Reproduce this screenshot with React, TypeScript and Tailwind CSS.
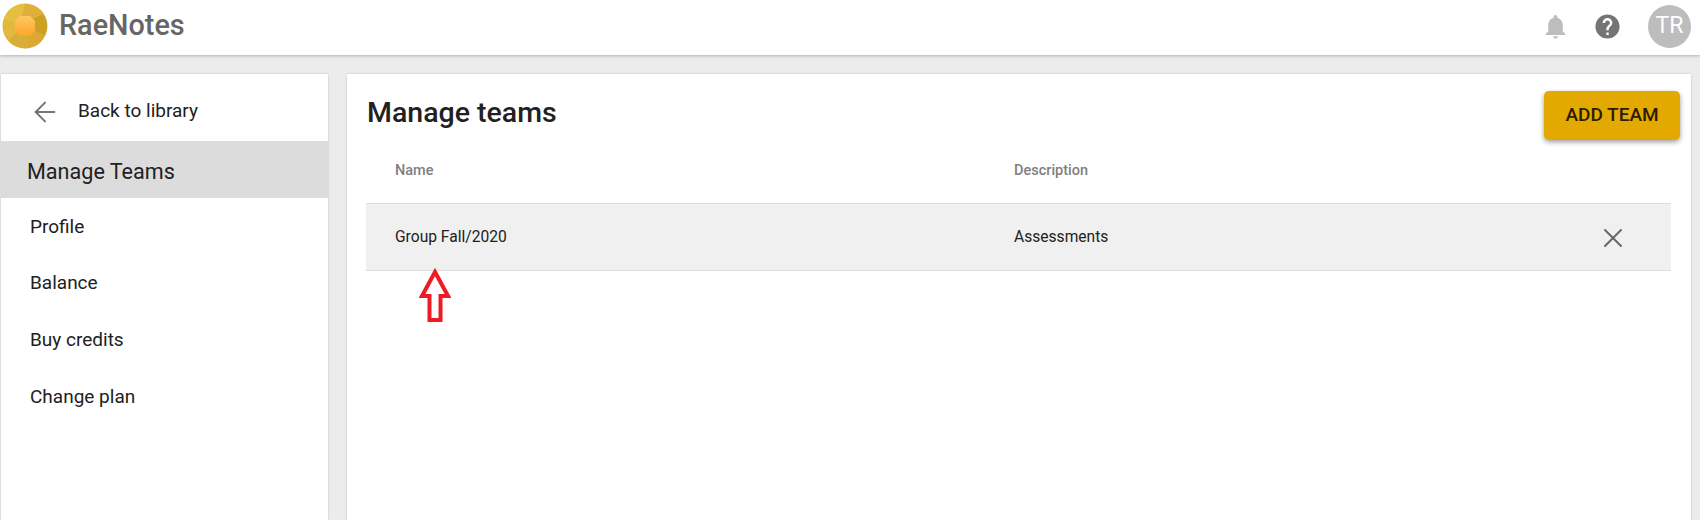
import { ArrowLeft, X } from "lucide-react"

const menuItems = ["Profile", "Balance", "Buy credits", "Change plan"]

function Logo() {
  return (
    <svg width="46" height="46" viewBox="0 0 46 46" className="shrink-0">
      <defs>
        <linearGradient id="core" x1="0" y1="0" x2="0" y2="1">
          <stop offset="0" stopColor="#fdc765" />
          <stop offset="1" stopColor="#fea726" />
        </linearGradient>
      </defs>
      <circle cx="23" cy="23" r="22.5" fill="#dcb135" />
      <path d="M23 1A22 22 0 0 1 41 11L30 15 20 12Z" fill="#dfae3d" />
      <path d="M41 11A22 22 0 0 1 43 32L33 28 31 16Z" fill="#caa025" />
      <path d="M43 32A22 22 0 0 1 27 45L25 33 33 28Z" fill="#dda733" />
      <path d="M27 45A22 22 0 0 1 7 37L15 29 25 33Z" fill="#d9ad3a" />
      <path d="M7 37A22 22 0 0 1 2 16L13 20 15 29Z" fill="#e2b83e" />
      <path d="M2 16A22 22 0 0 1 23 1L20 12 13 20Z" fill="#e6bf3f" />
      <path d="M18 13H28L33 18V28L28 33H18L13 28V18Z" fill="url(#core)" />
    </svg>
  )
}

function BellIcon() {
  return (
    <svg width="29" height="29" viewBox="0 0 24 24" fill="#bdbdbd">
      <path d="M12 22c1.1 0 2-.9 2-2h-4c0 1.1.9 2 2 2zm6-6v-5c0-3.07-1.63-5.64-4.5-6.32V4c0-.83-.67-1.5-1.5-1.5s-1.5.67-1.5 1.5v.68C7.64 5.36 6 7.92 6 11v5l-2 2v1h16v-1l-2-2z" />
    </svg>
  )
}

function HelpIcon() {
  return (
    <svg width="29" height="29" viewBox="0 0 24 24" fill="#757575">
      <path d="M12 2C6.48 2 2 6.48 2 12s4.48 10 10 10 10-4.48 10-10S17.52 2 12 2zm1 17h-2v-2h2v2zm2.07-7.75l-.9.92C13.45 12.9 13 13.5 13 15h-2v-.5c0-1.1.45-2.1 1.17-2.83l1.24-1.26c.37-.36.59-.86.59-1.41 0-1.1-.9-2-2-2s-2 .9-2 2H8c0-2.21 1.79-4 4-4s4 1.79 4 4c0 .88-.36 1.68-.93 2.25z" />
    </svg>
  )
}

export default function App() {
  return (
    <div className="h-[520px] w-[1700px] overflow-hidden bg-[#ececec] font-['Roboto',sans-serif] text-[#212121]">
      <header className="relative z-10 flex h-[55px] items-center justify-between bg-white pr-[9px] pb-[3px] pl-[2px] shadow-[0_1px_3px_rgba(0,0,0,0.25)]">
        <div className="flex items-center gap-[11px]">
          <Logo />
          <span className="text-[28.8px] font-medium text-[#666666]">RaeNotes</span>
        </div>
        <div className="flex items-center">
          <BellIcon />
          <span className="mr-[26px] ml-[23px] flex">
            <HelpIcon />
          </span>
          <div className="flex h-[43px] w-[43px] items-center justify-center rounded-full bg-[#bdbdbd] text-[23px] text-white">
            TR
          </div>
        </div>
      </header>

      <div className="flex h-[465px] items-stretch gap-[19px] pt-[19px] pr-[9px] pl-px">
        <aside className="w-[327px] shrink-0 bg-white shadow-[0_0_2px_rgba(0,0,0,0.2)]">
          <div className="flex h-[67px] items-center pt-[8px] pl-[28px] text-[19px]">
            <ArrowLeft size={32} strokeWidth={1.5} className="mr-[17px] text-[#757575]" />
            Back to library
          </div>
          <div className="flex h-[57px] items-center bg-[#dcdcdc] pt-[5px] pl-[26px] text-[21.6px]">Manage Teams</div>
          <ul>
            {menuItems.map((item) => (
              <li key={item} className="flex h-[56.7px] items-center pt-px pl-[29px] text-[19px]">
                {item}
              </li>
            ))}
          </ul>
        </aside>

        <main className="relative flex-1 bg-white pr-[20px] pl-[19px] shadow-[0_0_2px_rgba(0,0,0,0.2)]">
          <div className="flex h-[74px] items-start justify-between">
            <h1 className="mt-[20px] pl-[1px] text-[28.5px] leading-[38px] font-medium">Manage teams</h1>
            <button className="mt-[17px] -mr-[9px] h-[49px] w-[136px] rounded-[5px] bg-[#e4a900] text-[19px] font-medium text-[#2b1d00] shadow-[0_2px_5px_rgba(0,0,0,0.4)]">
              ADD TEAM
            </button>
          </div>
          <div className="flex h-[55px] items-start text-[14.5px] font-medium text-[#808080]">
            <span className="w-[648px] pt-[12px] pl-[29px]">Name</span>
            <span className="pt-[12px]">Description</span>
          </div>
          <div className="flex h-[68px] items-center border-y border-[#dddddd] bg-[#f0f0f0] pt-px text-[15.6px]">
            <span className="w-[648px] pl-[29px]">Group Fall/2020</span>
            <span className="flex-1">Assessments</span>
            <X size={32} strokeWidth={1.5} className="mr-[42px] text-[#666666]" />
          </div>
          {/* annotation arrow drawn over the page */}
          <svg width="32" height="56" viewBox="0 0 32 56" className="absolute top-[194px] left-[72px]">
            <path d="M16 4 29 28H21.5V52H10.5V28H3Z" fill="white" stroke="#ed1c24" strokeWidth="4" />
          </svg>
        </main>
      </div>
    </div>
  )
}
